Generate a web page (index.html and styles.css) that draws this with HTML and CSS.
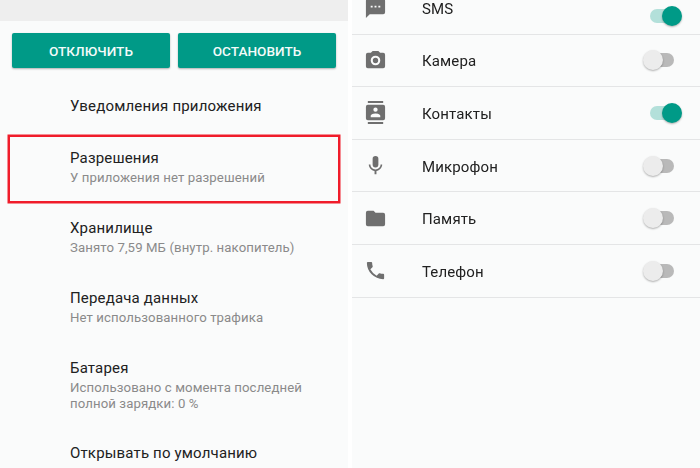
FILE: index.html
```html
<!DOCTYPE html>
<html lang="ru">
<head>
<meta charset="utf-8">
<title>Приложение</title>
<link rel="stylesheet" href="styles.css">
</head>
<body>
<main class="screen">
  <section class="panel left">
    <div class="topband"></div>
    <div class="buttons">
      <button class="btn">ОТКЛЮЧИТЬ</button>
      <button class="btn">ОСТАНОВИТЬ</button>
    </div>
    <div class="item single"><div class="title">Уведомления приложения</div></div>
    <div class="item hl">
      <div class="title">Разрешения</div>
      <div class="sub">У приложения нет разрешений</div>
    </div>
    <div class="item">
      <div class="title">Хранилище</div>
      <div class="sub">Занято 7,59 МБ (внутр. накопитель)</div>
    </div>
    <div class="item">
      <div class="title">Передача данных</div>
      <div class="sub">Нет использованного трафика</div>
    </div>
    <div class="item tall">
      <div class="title">Батарея</div>
      <div class="sub">Использовано с момента последней<br>полной зарядки: 0 %</div>
    </div>
    <div class="item">
      <div class="title">Открывать по умолчанию</div>
    </div>
  </section>
  <section class="panel right">
    <div class="perm first">
      <svg class="ico" viewBox="0 0 24 24"><path d="M20 2H4a2 2 0 0 0-2 2v18l4-4h14a2 2 0 0 0 2-2V4a2 2 0 0 0-2-2zM9 11H7V9h2zm4 0h-2V9h2zm4 0h-2V9h2z"/></svg>
      <span class="name">SMS</span><span class="sw on"></span>
    </div>
    <div class="perm">
      <svg class="ico" viewBox="0 0 24 24"><path d="M9 2 7.17 4H4a2 2 0 0 0-2 2v12a2 2 0 0 0 2 2h16a2 2 0 0 0 2-2V6a2 2 0 0 0-2-2h-3.17L15 2zm3 15a5 5 0 1 1 0-10 5 5 0 0 1 0 10zm0-2.2a2.8 2.8 0 1 0 0-5.6 2.8 2.8 0 0 0 0 5.6z" fill-rule="evenodd"/></svg>
      <span class="name">Камера</span><span class="sw"></span>
    </div>
    <div class="perm">
      <svg class="ico" viewBox="0 0 24 24"><path d="M20 0H4v2h16zM4 24h16v-2H4zM20 4H4a2 2 0 0 0-2 2v12a2 2 0 0 0 2 2h16a2 2 0 0 0 2-2V6a2 2 0 0 0-2-2zm-8 2.75a2.25 2.25 0 1 1 0 4.5 2.25 2.25 0 0 1 0-4.5zM17 17H7v-1.5c0-1.67 3.33-2.5 5-2.5s5 .83 5 2.5z"/></svg>
      <span class="name">Контакты</span><span class="sw on"></span>
    </div>
    <div class="perm">
      <svg class="ico" viewBox="0 0 24 24"><path d="M12 14a3 3 0 0 0 3-3V5a3 3 0 0 0-6 0v6a3 3 0 0 0 3 3zm5.3-3c0 3-2.54 5.1-5.3 5.1S6.7 14 6.7 11H5c0 3.41 2.72 6.23 6 6.72V21h2v-3.28c3.28-.48 6-3.3 6-6.72z"/></svg>
      <span class="name">Микрофон</span><span class="sw"></span>
    </div>
    <div class="perm">
      <svg class="ico" viewBox="0 0 24 24"><path d="M10 4H4a2 2 0 0 0-2 2v12a2 2 0 0 0 2 2h16a2 2 0 0 0 2-2V8a2 2 0 0 0-2-2h-8z"/></svg>
      <span class="name">Память</span><span class="sw"></span>
    </div>
    <div class="perm">
      <svg class="ico" viewBox="0 0 24 24"><path d="M6.62 10.79a15.15 15.15 0 0 0 6.59 6.59l2.2-2.2a1 1 0 0 1 1.02-.24 11.36 11.36 0 0 0 3.57.57 1 1 0 0 1 1 1V20a1 1 0 0 1-1 1A17 17 0 0 1 3 4a1 1 0 0 1 1-1h3.5a1 1 0 0 1 1 1c0 1.25.2 2.45.57 3.57a1 1 0 0 1-.25 1.02z"/></svg>
      <span class="name">Телефон</span><span class="sw"></span>
    </div>
  </section>
</main>
</body>
</html>
```
FILE: styles.css
```css
* { box-sizing: border-box; }
html, body { margin: 0; padding: 0; background: #fff; }
.screen {
  width: 700px;
  height: 468px;
  display: flex;
  gap: 4px;
  overflow: hidden;
  font-family: Roboto, "Noto Sans", sans-serif;
  filter: blur(0.4px);
}
.panel { background: #fafbfb; height: 468px; overflow: hidden; }
.left { width: 348px; }
.right { width: 348px; }
.topband { height: 21px; background: #eeeeee; }
.buttons { display: flex; gap: 8px; padding: 12px 12px 0; }
.btn {
  flex: 0 0 158px;
  height: 35px;
  border: 0;
  border-radius: 2px;
  padding: 0;
  background: #009a87;
  color: #f4fbfa;
  font: 500 13.6px Roboto, sans-serif;
  box-shadow: 0 1px 2px rgba(0,0,0,.3);
}
.item { margin: 0 8px; padding: 12px 0 0 62px; height: 70px; }
.item.single { height: 67px; padding-top: 28px; }
.item.hl { height: 68px; border: 2px solid #f01c2a; box-shadow: 0 0 0 .5px #f01c2a; padding: 11px 0 0 60px; margin-bottom: 3px; }
.item.tall { height: 85px; }
.title { font-size: 15px; line-height: 20px; color: #212121; letter-spacing: 0.17px; }
.sub { font-size: 13.2px; line-height: 16px; margin-top: 2px; color: #8a8a8a; letter-spacing: 0.1px; }
.perm {
  height: 52.6px;
  display: flex;
  align-items: center;
  border-bottom: 1px solid #e4e5e6;
  padding: 0 26px 0 12px;
}
.perm.first { height: 34.6px; align-items: flex-end; padding-bottom: 16px; }
.ico { width: 23px; height: 23px; fill: #6f6f6f; flex: none; }
.first .ico { margin-bottom: -2px; }
.name { flex: 1; margin-left: 35px; padding-top: 2px; font-size: 15px; line-height: 20px; color: #212121; letter-spacing: .13px; }
.first .name { padding-top: 0; margin-bottom: -1px; }
.sw { position: relative; width: 24px; height: 14px; border-radius: 7px; background: #b9b9b9; flex: none; }
.sw::after {
  content: "";
  position: absolute;
  left: -7px;
  top: -3px;
  width: 20px;
  height: 20px;
  border-radius: 50%;
  background: #ececec;
  box-shadow: 0 1px 2px rgba(0,0,0,.3);
}
.sw.on { background: #b3e0da; }
.sw.on::after { left: 12px; background: #009a87; }
.first .sw { margin-bottom: -5px; }
```
